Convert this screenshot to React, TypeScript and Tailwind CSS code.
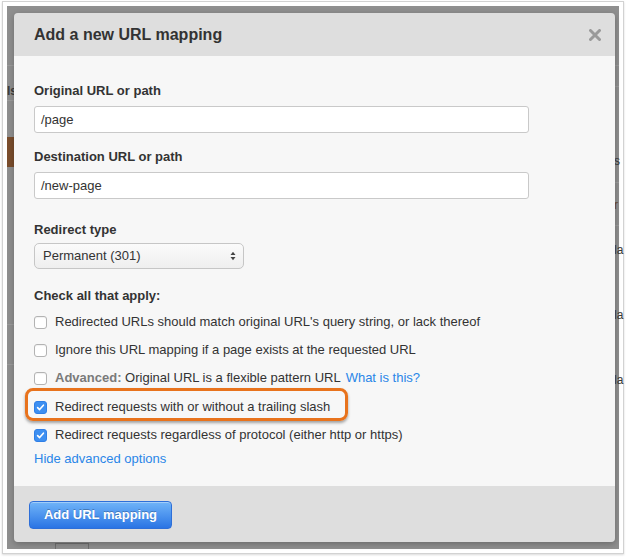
import React from "react";

function Checkbox({ checked }: { checked?: boolean }) {
  if (checked) {
    return (
      <span className="flex h-[13px] w-[13px] shrink-0 items-center justify-center rounded-[3px] border border-[#2f7fe6] bg-[#3d8ff1]">
        <svg width="9" height="9" viewBox="0 0 9 9">
          <path d="M1.6 4.6 L3.6 6.6 L7.4 2.2" fill="none" stroke="#fff" strokeWidth="1.6" strokeLinecap="round" strokeLinejoin="round" />
        </svg>
      </span>
    );
  }
  return <span className="h-[13px] w-[13px] shrink-0 rounded-[3px] border border-[#b3b3b3] bg-white shadow-[inset_0_1px_1px_rgba(0,0,0,0.06)]" />;
}

function Row({ checked, children }: { checked?: boolean; children: React.ReactNode }) {
  return (
    <div className="flex h-[28px] items-center gap-[8px]">
      <Checkbox checked={checked} />
      <span className="text-[13px] text-[#333]">{children}</span>
    </div>
  );
}

export default function App() {
  return (
    <div
      className="h-[557px] w-[626px] bg-white pl-[2px] pt-[1px]"
      style={{ fontFamily: '"Liberation Sans", Arial, sans-serif' }}
    >
      <div className="h-[553px] w-[622px] border border-[#d2d2d2] bg-white p-[4px] shadow-[0_1px_2px_rgba(0,0,0,0.15)]">
        <div className="relative h-full w-full bg-[#8f8f8f] p-[7px]">
          {/* page behind the overlay */}
          <div className="absolute left-0 top-[59px] h-px w-[7px] bg-[#9c9c9c]" />
          <div className="absolute left-0 top-[94px] h-px w-[7px] bg-[#9c9c9c]" />
          <div className="absolute left-0 top-[76px] text-[12px] font-bold text-[#3a3a3a]">ls</div>
          <div className="absolute left-0 top-[131px] h-[30px] w-[7px] bg-[#7a4d2c]" />
          <div className="absolute left-0 top-[318px] h-px w-[7px] bg-[#9c9c9c]" />
          <div className="absolute left-0 top-[358px] h-px w-[7px] bg-[#9c9c9c]" />
          <div className="absolute right-0 top-[59px] h-px w-[6px] bg-[#9c9c9c]" />
          <div className="absolute right-0 top-[80px] h-px w-[6px] bg-[#9c9c9c]" />
          <div className="absolute right-0 top-[176px] h-px w-[6px] bg-[#9c9c9c]" />
          <div className="absolute right-0 top-[219px] h-px w-[6px] bg-[#9c9c9c]" />
          <div className="absolute left-[607px] top-[146px] text-[12px] text-[#3a3a3a]">s</div>
          <div className="absolute left-[607px] top-[190px] text-[12px] text-[#6b4a30]">r</div>
          <div className="absolute left-[607px] top-[235px] text-[12px] text-[#3a3a3a]">la</div>
          <div className="absolute left-[607px] top-[300px] text-[12px] text-[#3a3a3a]">la</div>
          <div className="absolute left-[607px] top-[365px] text-[12px] text-[#3a3a3a]">la</div>
          <div className="absolute bottom-0 left-[48px] h-[6px] w-[34px] border-x border-t border-[#6f6f6f]" />

          <div className="relative flex h-[529px] w-[601px] flex-col overflow-hidden rounded-[4px] shadow-[0_2px_6px_rgba(0,0,0,0.25)]">
            <div className="flex h-[43px] shrink-0 items-center justify-between bg-[#dedede] pl-[20px] pr-[14px]">
              <h2 className="text-[16px] font-bold text-[#333]">Add a new URL mapping</h2>
              <svg width="12" height="12" viewBox="0 0 12 12">
                <path d="M1.5 1.5 L10.5 10.5 M10.5 1.5 L1.5 10.5" stroke="#9a9a9a" strokeWidth="3" strokeLinecap="round" />
              </svg>
            </div>

            <div className="flex flex-1 flex-col bg-[#f7f7f7] px-[20px] pt-[27px]">
              <label className="h-[16px] text-[13px] font-bold leading-[16px] text-[#333]">Original URL or path</label>
              <div className="mt-[7px] flex h-[27px] w-[495px] items-center rounded-[3px] border border-[#c9c9c9] bg-white px-[6px] text-[13px] text-[#333]">
                /page
              </div>

              <label className="mt-[16px] h-[16px] text-[13px] font-bold leading-[16px] text-[#333]">Destination URL or path</label>
              <div className="mt-[7px] flex h-[27px] w-[495px] items-center rounded-[3px] border border-[#c9c9c9] bg-white px-[6px] text-[13px] text-[#333]">
                /new-page
              </div>

              <label className="mt-[23px] h-[16px] text-[13px] font-bold leading-[16px] text-[#333]">Redirect type</label>
              <div className="mt-[5px] flex h-[26px] w-[210px] items-center justify-between rounded-[5px] border border-[#c6c6c6] bg-gradient-to-b from-[#fbfbfb] to-[#efefef] pl-[8px] pr-[7px] text-[13px] text-[#333]">
                <span>Permanent (301)</span>
                <svg width="6" height="10" viewBox="0 0 6 10">
                  <path d="M0.5 4 L3 0.8 L5.5 4 Z M0.5 6 L3 9.2 L5.5 6 Z" fill="#444" />
                </svg>
              </div>

              <label className="mt-[19px] h-[16px] text-[13px] font-bold leading-[16px] text-[#333]">Check all that apply:</label>
              <div className="mt-[4px] flex flex-col">
                <Row>Redirected URLs should match original URL's query string, or lack thereof</Row>
                <Row>Ignore this URL mapping if a page exists at the requested URL</Row>
                <Row>
                  <span className="font-bold text-[#7a7a7a]">Advanced:</span> Original URL is a flexible pattern URL
                  <span className="ml-[5px] text-[#2a86e8]">What is this?</span>
                </Row>
                <div className="relative mt-px">
                  <div className="absolute left-[-9px] top-[-5px] h-[33px] w-[323px] rounded-[8px] border-[3px] border-[#e8731d] shadow-[0_2px_3px_rgba(0,0,0,0.35)]" />
                  <Row checked>Redirect requests with or without a trailing slash</Row>
                </div>
                <Row checked>Redirect requests regardless of protocol (either http or https)</Row>
              </div>
              <div className="mt-[2px] h-[16px] text-[13px] leading-[16px] text-[#2a86e8]">Hide advanced options</div>
            </div>

            <div className="h-[56px] shrink-0 bg-[#dedede] px-[15px] pt-[15px]">
              <button className="flex h-[28px] w-[143px] items-center justify-center rounded-[4px] border border-[#2e6fd8] bg-gradient-to-b from-[#70b4f8] to-[#2a74e4] text-[13px] font-bold text-white shadow-[inset_0_1px_0_rgba(255,255,255,0.35)] [text-shadow:0_-1px_0_rgba(0,0,0,0.25)]">
                Add URL mapping
              </button>
            </div>
          </div>
        </div>
      </div>
    </div>
  );
}
